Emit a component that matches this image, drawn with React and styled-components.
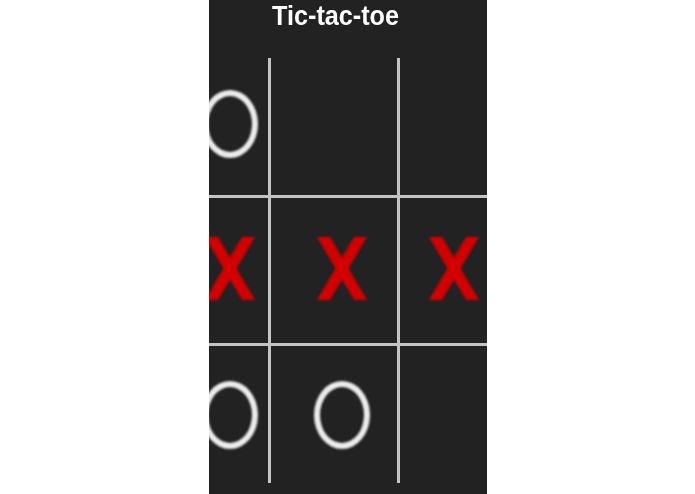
import React from 'react'
import styled, { createGlobalStyle } from 'styled-components'

const GlobalStyle = createGlobalStyle`
	html, body {
		margin: 0;
		padding: 0;
		background: #ffffff;
	}
`;

const board = [
	['o', null, null],
	['x', 'x', 'x'],
	['o', 'o', null],
]

// nudge per column / row so the marks sit where the original had them
const colPad = ['0 0 0 50px', '0 0 0 16px', '0 20px 0 0']
const rowPad = ['0 0 6px 0', '0 0 4px 0', '0']

const Cross = () => (
	<svg width="50" height="63" viewBox="0 0 50 63">
		<polygon points="0,0 13,0 50,63 37,63" fill="#d20000" />
		<polygon points="37,0 50,0 13,63 0,63" fill="#d20000" />
	</svg>
)

const App = () => {
	return (
		<>
			<GlobalStyle />
			<Panel>
				<Header>
					<Title>Tic-tac-toe</Title>
				</Header>
				<Board>
					{board.map((row, r) =>
						row.map((mark, c) => (
							<Cell key={`${r}-${c}`} $col={c} $row={r} $pad={rowPad[r]} $side={colPad[c]}>
								<Mark>
									{mark === 'x' && <Cross />}
									{mark === 'o' && <Ring />}
								</Mark>
							</Cell>
						))
					)}
				</Board>
			</Panel>
		</>
	)
}

const Panel = styled.div`
	width: 278px;
	height: 494px;
	margin: 0 auto;
	background-color: #222222;
	overflow: hidden;
	display: flex;
	flex-direction: column;
`;

const Header = styled.div`
	height: 58px;
	padding-right: 24px;
	display: flex;
	justify-content: center;
	align-items: flex-start;
`;

const Title = styled.h1`
	display: inline-block;
	margin: 0;
	color: #ffffff;
	font-family: "Liberation Sans", Arial, sans-serif;
	font-weight: bold;
	font-size: 28px;
	line-height: normal;
	transform: scaleX(0.9);
	white-space: nowrap;
`;

const Board = styled.div`
	display: grid;
	grid-template-columns: 129px 129px 129px;
	grid-template-rows: 140px 148px 137px;
	width: 387px;
	margin-left: -67px;
	flex-shrink: 0;
`;

const Cell = styled.div`
	box-sizing: border-box;
	display: flex;
	align-items: center;
	justify-content: center;
	padding: ${p => p.$side};
	border-right: ${p => (p.$col < 2 ? '3px solid #c4c4c4' : 'none')};
	border-bottom: ${p => (p.$row < 2 ? '3px solid #c4c4c4' : 'none')};

	& > div {
		margin: ${p => p.$pad};
	}
`;

const Mark = styled.div`
	display: flex;
	align-items: center;
	justify-content: center;
	filter: blur(0.9px);
`;

const Ring = styled.div`
	box-sizing: border-box;
	width: 56px;
	height: 68px;
	border: 6px solid #ececec;
	border-radius: 50%;
`;

export default App
